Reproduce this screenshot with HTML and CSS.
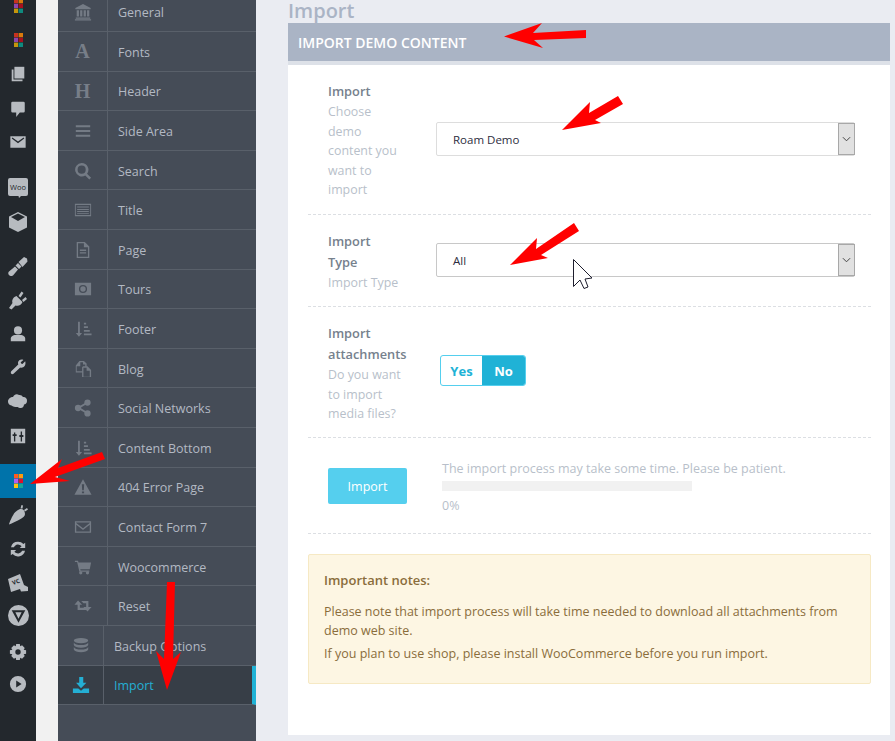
FILE: index.html
```html
<!DOCTYPE html>
<html lang="en">
<head>
<meta charset="utf-8">
<title>Import</title>
<link rel="stylesheet" href="styles.css">
</head>
<body>
<svg class="defs" xmlns="http://www.w3.org/2000/svg">
  <symbol id="grid" viewBox="0 0 9 14">
    <rect x="0" y="0" width="4" height="4.3" fill="#c8321e"/><rect x="4.6" y="0" width="4.4" height="4.3" fill="#d97a0c"/>
    <rect x="0" y="4.8" width="4" height="4.3" fill="#8e44ad"/><rect x="4.6" y="4.8" width="4.4" height="4.3" fill="#a90f1c"/>
    <rect x="0" y="9.6" width="4" height="4.4" fill="#c4960c"/><rect x="4.6" y="9.6" width="4.4" height="4.4" fill="#0f8a7e"/>
  </symbol>
  <symbol id="grid-on" viewBox="0 0 9 14">
    <rect x="0" y="0" width="4" height="4.3" fill="#ff5a1e"/><rect x="4.6" y="0" width="4.4" height="4.3" fill="#ff9a0c"/>
    <rect x="0" y="4.8" width="4" height="4.3" fill="#b45cf0"/><rect x="4.6" y="4.8" width="4.4" height="4.3" fill="#e0102a"/>
    <rect x="0" y="9.6" width="4" height="4.4" fill="#ffc20c"/><rect x="4.6" y="9.6" width="4.4" height="4.4" fill="#14a89a"/>
  </symbol>
  <symbol id="sort" viewBox="0 0 20 20">
    <path d="M4.500 2h2v12.500H9L5.500 18.500 2 14.500h2.500zM11 3h2.500v2H11zM11 7h4.500v2H11zM11 11h6.500v2H11zM11 15h8.500v2H11z"/>
  </symbol>
</svg>
<div class="app">
  <aside class="adminbar">
    <div class="ab-item ab-first"><svg class="ab-grid"><use href="#grid"/></svg></div>
    <div class="ab-item"><svg class="ab-grid"><use href="#grid"/></svg></div>
    <div class="ab-item"><svg class="ab-icon" viewBox="0 0 20 20"><path d="M6 2h11v13H6z"/><path d="M3 5h2v11h10v2H3z"/></svg></div>
    <div class="ab-item"><svg class="ab-icon" viewBox="0 0 20 20"><path d="M4 3h12a1.500 1.500 0 0 1 1.500 1.500v9A1.500 1.500 0 0 1 16 15h-4l-4 5v-5H4a1.500 1.500 0 0 1-1.500-1.500v-9A1.500 1.500 0 0 1 4 3z"/></svg></div>
    <div class="ab-item"><svg class="ab-icon" viewBox="0 0 20 20"><path fill-rule="evenodd" d="M1.500 3.500h17v13h-17zM3 6l7 5.500L17 6l-.8-1L10 9.500 3.800 5z"/></svg></div>
    <div class="ab-item ab-gap"><svg class="ab-woo" viewBox="0 0 20 20"><path d="M2 0h16a2 2 0 0 1 2 2v14a2 2 0 0 1-2 2h-5l-2 2-.5-2H2a2 2 0 0 1-2-2V2a2 2 0 0 1 2-2z"/><text class="woo-text" x="10" y="11.500" text-anchor="middle">Woo</text></svg></div>
    <div class="ab-item"><svg class="ab-icon ab-lg" viewBox="0 0 20 20"><path fill-rule="evenodd" d="M10 0l9 4.500v11L10 20l-9-4.500v-11zM3 5l7 4 7-4-7-3.500z"/></svg></div>
    <div class="ab-item ab-gap2"><svg class="ab-icon ab-lg" viewBox="0 0 20 20"><path d="M1 15.500l6-5 3 3-5 6c-1.500 1-3 .5-4-.5s-1-2.500 0-3.500zM7.500 9.500L10 7l3.500 3.500L11 13zM10.500 6L16 1l3 1.500.5 3-5 5.500z"/></svg></div>
    <div class="ab-item"><svg class="ab-icon ab-lg" viewBox="0 0 20 20"><path d="M8.500 6l6 6c-1 3-4 4.500-7 3.500L3.500 19.500 1 18l3.500-5C3.500 10 5.500 7 8.500 6zM10.500 6l3-4.500 2 1.500-3 4.500zM14 10l3.500-3 1.500 2-3.500 3z"/></svg></div>
    <div class="ab-item"><svg class="ab-icon" viewBox="0 0 20 20"><circle cx="10" cy="6" r="4.500"/><path d="M2 18v-3c0-2.500 3-4 5-4h6c2 0 5 1.500 5 4v3z"/></svg></div>
    <div class="ab-item"><svg class="ab-icon" viewBox="0 0 20 20"><path d="M18 2.500l-3 3-1.500-.5L13 3.500l3-2.500c-2.500-1-5.500 0-6 3 0 1 0 1.500.3 2L2.500 13.500c-1.500 1.500 .5 4.500 2.500 3l7.500-7c3 1 7-2 5.500-7z"/></svg></div>
    <div class="ab-item"><svg class="ab-icon ab-lg" viewBox="0 0 20 20"><path d="M5 5a4 4 0 0 1 6-2 4 4 0 0 1 4 2 3.500 3.500 0 0 1 4 4c0 2-1.500 3.500-3 3.500 0 2-1.500 4-4 3.500-2-.5-2-1-3-1-2 0-4 0-5.500-1.500C1 13 0 11 0 9.500 0 7 2.500 5 5 5z"/></svg></div>
    <div class="ab-item"><svg class="ab-icon" viewBox="0 0 20 20"><path fill-rule="evenodd" d="M2 2h16v16H2zM5.500 6v2H4v2h1.500v6h1.500v-6h1.500V8H7V6zM13 5v4h-1.500v2H13v5h1.500v-5H16V9h-1.500V5z"/></svg></div>
    <div class="ab-item ab-active"><svg class="ab-grid"><use href="#grid-on"/></svg></div>
    <div class="ab-item"><svg class="ab-icon ab-lg" viewBox="0 0 20 20"><path d="M11 4.500c3-1.500 6 .5 6 4.500 0 2-2 3.500-4 4.800C9 16 4 18.500 1 19.500 1.500 17 4 12 6 8.500 7.500 6.500 9 5.500 11 4.500zM12.500 3.500L13.500 0l1.500.5-.5 3zM16 5l3-2 1 1.500-3 2z"/></svg></div>
    <div class="ab-item"><svg class="ab-icon" viewBox="0 0 20 20"><path d="M10 2a8 8 0 0 1 6 2.500L18 3v6h-6l2-2a5 5 0 0 0-8.500 1H2.200A8 8 0 0 1 10 2zM2 11h6l-2 2a5 5 0 0 0 8.500-1h3.300A8 8 0 0 1 4 15.500L2 17z"/></svg></div>
    <div class="ab-item"><svg class="ab-icon ab-lg" viewBox="0 0 20 20"><path d="M0 6l12-5 4 11 4 2v4l-7 .5-1-2.500-9 3z"/><text class="vc-text" x="5" y="12" transform="rotate(-20 5 12)">VC</text></svg></div>
    <div class="ab-item ab-tight"><svg class="ab-icon ab-xl" viewBox="0 0 20 20"><path fill-rule="evenodd" d="M10 0a10 10 0 1 1 0 20 10 10 0 0 1 0-20zM3.500 5l6.500 12 6.500-12zM7 7h6l-3 6z"/></svg></div>
    <div class="ab-item ab-wide"><svg class="ab-icon" viewBox="0 0 20 20"><path fill-rule="evenodd" d="M8 1h4l.5 2.500 2-1 3 3-1.200 2 2.700.5v4l-2.700.5 1.200 2-3 3-2-1.200L12 19H8l-.5-2.700-2 1.200-3-3 1.200-2L1 12V8l2.700-.5-1.200-2 3-3 2 1zM10 7a3 3 0 1 0 0 6 3 3 0 0 0 0-6z"/></svg></div>
    <div class="ab-item ab-tight"><svg class="ab-icon" viewBox="0 0 20 20"><path fill-rule="evenodd" d="M10 1a9 9 0 1 1 0 18 9 9 0 0 1 0-18zM8 6v8l6-4z"/></svg></div>
  </aside>

  <div class="gutter"></div>

  <nav class="subnav">
    <a class="nav-row"><span class="nav-ico"><svg viewBox="0 0 20 20"><path d="M10 1l8.500 4.500V7h-17V5.500zM3 8h2.500v7H3zM6.800 8h2.500v7H6.800zM10.700 8h2.500v7h-2.500zM14.500 8H17v7h-2.500zM2 16h16v1.500H2zM1 18h18v1.500H1z"/></svg></span><span class="nav-label">General</span></a>
    <a class="nav-row"><span class="nav-ico nav-letter">A</span><span class="nav-label">Fonts</span></a>
    <a class="nav-row"><span class="nav-ico nav-letter">H</span><span class="nav-label">Header</span></a>
    <a class="nav-row"><span class="nav-ico"><svg viewBox="0 0 20 20"><path d="M2 3.500h16v2.300H2zM2 8.800h16v2.300H2zM2 14.200h16v2.300H2z"/></svg></span><span class="nav-label">Side Area</span></a>
    <a class="nav-row"><span class="nav-ico"><svg viewBox="0 0 20 20"><path fill-rule="evenodd" d="M8.500 1a7.500 7.500 0 0 1 6 12l4.500 4.500-2 2-4.500-4.500A7.500 7.500 0 1 1 8.500 1zm0 3a4.500 4.500 0 1 0 0 9 4.500 4.500 0 0 0 0-9z"/></svg></span><span class="nav-label">Search</span></a>
    <a class="nav-row"><span class="nav-ico"><svg viewBox="0 0 20 20"><path fill-rule="evenodd" d="M1 3h18v14H1zM2 4.500v11h16v-11zM3.500 6H16.500v1.300H3.500zM3.500 9H16.500v1H3.500zM3.500 11.200H16.500v1H3.500zM3.500 13.300H16.500v1H3.500z"/></svg></span><span class="nav-label">Title</span></a>
    <a class="nav-row"><span class="nav-ico"><svg viewBox="0 0 20 20"><path fill-rule="evenodd" d="M3 1h9l5 5v13H3zM4.500 2.500v15h11V7H11V2.500zM6.500 9.500h7V11h-7zM6.500 12.500h7V14h-7z"/></svg></span><span class="nav-label">Page</span></a>
    <a class="nav-row"><span class="nav-ico"><svg viewBox="0 0 20 20"><path fill-rule="evenodd" d="M1 3h18v14H1zM10 5.500a4.500 4.500 0 1 0 0 9 4.500 4.500 0 0 0 0-9zM10 7a3 3 0 1 1 0 6 3 3 0 0 1 0-6z"/></svg></span><span class="nav-label">Tours</span></a>
    <a class="nav-row"><span class="nav-ico"><svg><use href="#sort"/></svg></span><span class="nav-label">Footer</span></a>
    <a class="nav-row"><span class="nav-ico"><svg viewBox="0 0 20 20"><path fill-rule="evenodd" d="M6 1h5l3 3v3h1l4 4v8H9v-5H2V6zM7 2.500v4.500H3v5.500h6V8l1-1h2.500V5H10V2.500zM10.500 8.500v10h7v-6.500H14V8.500z"/></svg></span><span class="nav-label">Blog</span></a>
    <a class="nav-row"><span class="nav-ico"><svg viewBox="0 0 20 20"><circle cx="4.500" cy="10" r="3.500"/><circle cx="15" cy="4" r="3.500"/><circle cx="15" cy="16" r="3.500"/><path d="M4.500 9l10-6 1 1.800-10 6zM5.500 9l10 6-1 1.800-10-6z"/></svg></span><span class="nav-label">Social Networks</span></a>
    <a class="nav-row"><span class="nav-ico"><svg><use href="#sort"/></svg></span><span class="nav-label">Content Bottom</span></a>
    <a class="nav-row"><span class="nav-ico"><svg viewBox="0 0 20 20"><path fill-rule="evenodd" d="M10 1.500l9.500 17H.5zM8.700 7l.4 6.500h1.800l.4-6.500zM8.800 15v2h2.400v-2z"/></svg></span><span class="nav-label">404 Error Page</span></a>
    <a class="nav-row"><span class="nav-ico"><svg viewBox="0 0 20 20"><path fill-rule="evenodd" d="M1 3.500h18v13H1zM2.500 5v.6L10 11.300l7.500-5.700V5zM2.500 7.500V15h15V7.500L10 13.200z"/></svg></span><span class="nav-label">Contact Form 7</span></a>
    <a class="nav-row"><span class="nav-ico"><svg viewBox="0 0 20 20"><circle cx="7.500" cy="16.500" r="1.800"/><circle cx="15" cy="16.500" r="1.800"/><path d="M1 3h3.500l.5 2h14l-1.500 7.500H7l.4 1.500H17v1.200H6L3.500 4.500H1z"/></svg></span><span class="nav-label">Woocommerce</span></a>
    <a class="nav-row"><span class="nav-ico"><svg viewBox="0 0 20 20"><path d="M4.500 4L9 8.500H6.500V12H12l2.500 2.500H4V8.500H.5zM8 4.500H16V11h3.500L15 16l-4.500-5h3V7H10.500z"/></svg></span><span class="nav-label">Reset</span></a>
    <a class="nav-row nav-top"><span class="nav-ico"><svg viewBox="0 0 20 20"><ellipse cx="10" cy="4" rx="8" ry="3"/><path d="M2 6c1 2 4 3 8 3s7-1 8-3v3c-1 2-4 3-8 3s-7-1-8-3zM2 11c1 2 4 3 8 3s7-1 8-3v3c-1 2-4 3-8 3s-7-1-8-3z"/></svg></span><span class="nav-label">Backup Options</span></a>
    <a class="nav-row nav-top nav-current"><span class="nav-ico"><svg viewBox="0 0 20 20"><path d="M8 1h4.500v6.500H16L10 13.500 4.500 7.500H8zM1 14h6l3 2.500 3-2.500h6v5H1z"/></svg></span><span class="nav-label">Import</span></a>
  </nav>

  <main class="main">
    <h1 class="page-title">Import</h1>
    <section class="panel">
      <h2 class="panel-head">Import Demo Content</h2>
      <div class="panel-body">
        <div class="form-row">
          <div class="field-text">
            <div class="field-name">Import</div>
            <div class="field-desc">Choose<br>demo<br>content you<br>want to<br>import</div>
          </div>
          <div class="select select-light"><span class="select-value">Roam Demo</span><span class="select-btn"><svg viewBox="0 0 10 6"><path d="M1 1l4 4 4-4" /></svg></span></div>
        </div>
        <div class="form-row form-type">
          <div class="field-text">
            <div class="field-name">Import<br>Type</div>
            <div class="field-desc">Import Type</div>
          </div>
          <div class="select"><span class="select-value">All</span><span class="select-btn"><svg viewBox="0 0 10 6"><path d="M1 1l4 4 4-4" /></svg></span></div>
        </div>
        <div class="form-row form-attach">
          <div class="field-text">
            <div class="field-name">Import<br>attachments</div>
            <div class="field-desc">Do you want<br>to import<br>media files?</div>
          </div>
          <div class="toggle"><span class="toggle-opt toggle-off">Yes</span><span class="toggle-opt toggle-on">No</span></div>
        </div>
        <div class="form-row form-import">
          <button class="import-btn">Import</button>
          <div class="progress-wrap">
            <div class="progress-msg">The import process may take some time. Please be patient.</div>
            <div class="progress-bar"></div>
            <div class="progress-val">0%</div>
          </div>
        </div>
        <div class="notes">
          <h3 class="notes-title">Important notes:</h3>
          <p class="notes-p">Please note that import process will take time needed to download all attachments from demo web site.</p>
          <p class="notes-p">If you plan to use shop, please install WooCommerce before you run import.</p>
        </div>
      </div>
    </section>
  </main>
</div>

<svg class="overlay" viewBox="0 0 895 741" xmlns="http://www.w3.org/2000/svg">
  <g class="arrow">
    <polygon points="504,36.500 542,23 533,33 586,30 586,38 534,40 543,48"/>
    <polygon points="562,130 590,102 589,113 618,96 623,104 595,120 601,123"/>
    <polygon points="510,265 537,238 536,249 574,223 579,231 541,255 548,258"/>
    <polygon points="30,484 62,459 58,468 102,452 105,459 55,477 70,481"/>
    <polygon points="167,582 175,582 173,659 181,652 167,690 156,651 164,659"/>
  </g>
  <polygon class="cursor" points="573.500,259.500 573.500,286.500 580,280 584,288.500 588,287 585,279 592,278"/>
</svg>
</body>
</html>
```
FILE: styles.css
```css
* { box-sizing: border-box; }
html, body { margin: 0; height: 741px; overflow: hidden; }
body { background: #eaecf2; font-family: "Open Sans", "Liberation Sans", sans-serif; font-size: 12.500px; position: relative; }
.defs { display: none; }
.app { display: flex; height: 741px; overflow: hidden; }

.adminbar { width: 36px; flex: none; background: #23282d; display: flex; flex-direction: column; }
.ab-item { height: 34px; flex: none; display: flex; align-items: center; justify-content: center; }
.ab-first { margin-top: -11px; }
.ab-gap { margin-top: 12px; }
.ab-gap2 { margin-top: 10px; }
.ab-active { background: #0073aa; margin-top: 11px; }
.ab-tight { margin-top: -2px; }
.ab-wide { margin-top: 3px; }
.ab-grid { width: 9px; height: 14px; }
.ab-icon { width: 18px; height: 18px; fill: #b7bbc0; }
.ab-lg { width: 20px; height: 20px; }
.ab-xl { width: 21px; height: 21px; }
.ab-woo { width: 20px; height: 20px; fill: #b7bbc0; }
.woo-text { font-size: 7.500px; font-weight: 400; fill: #23282d; }
.vc-text { font-size: 6px; font-weight: 700; fill: #23282d; }

.gutter { width: 22px; flex: none; background: #f1f1f1; }

.subnav { width: 198px; flex: none; background: #454c57; }
.nav-row { display: flex; height: 39.600px; border-bottom: 1px solid #59606a; color: #b3b9c3; align-items: stretch; }
.nav-row:first-child { margin-top: -7.600px; }
.nav-ico { width: 50px; flex: none; padding-top: 1px; border-right: 1px solid #59606a; display: flex; align-items: center; justify-content: center; color: #777e88; }
.nav-ico svg { width: 18px; height: 18px; fill: #747b85; }
.nav-letter { font-family: "Liberation Serif", serif; font-weight: 700; font-size: 20px; }
.nav-label { padding: 2px 0 0 10px; display: flex; align-items: center; }
.nav-top .nav-ico { width: 46px; }
.nav-current { background: #373e47; color: #24afd4; border-right: 4px solid #20b2d6; }
.nav-current .nav-ico svg { fill: #24afd4; }

.main { flex: 1; min-width: 0; padding: 0 5px 0 32px; }
.page-title { margin: 0; height: 23px; font-size: 20px; line-height: 22px; font-weight: 600; color: #aab4c5; }
.panel { background: #fff; height: 712px; }
.panel-head { margin: 0; height: 42px; padding: 0 10px; border-bottom: 4px solid #dde1e8; background: #aab4c5; color: #fff; font-size: 14px; line-height: 40px; font-weight: 600; text-transform: uppercase; }
.panel-body { padding: 0 19px 0 20px; }

.form-row { display: flex; align-items: center; padding: 16px 20px 14px; border-bottom: 1px dashed #dcdfe3; }
.form-type { padding-bottom: 13.400px; }
.form-attach { padding-bottom: 13.200px; }
.field-text { width: 108px; flex: none; }
.field-name { font-size: 12.800px; font-weight: 600; color: #76818d; line-height: 21px; }
.field-desc { font-size: 12.400px; color: #b8bfca; line-height: 19.600px; }

.select { flex: 1; margin: 0 -4px 4px 0; height: 34px; border: 1px solid #c8c8c8; border-radius: 2px; display: flex; align-items: stretch; color: #2d2d40; font-size: 11.500px; }
.select-light { border-color: #ddd; margin-bottom: 3px; }
.select-value { flex: 1; padding: 1px 0 0 16px; display: flex; align-items: center; }
.select-btn { width: 17px; margin: 0 -1px 0 0; background: #e1e1e1; border: 1px solid #a8a8a8; display: flex; align-items: center; justify-content: center; }
.select-btn svg { width: 9px; height: 6px; fill: none; stroke: #444; stroke-width: 1.100; }

.toggle { margin: 0 0 6px 4px; display: flex; width: 86px; height: 31px; border: 1px solid #55cfee; border-radius: 3px; overflow: hidden; font-weight: 700; font-size: 13px; }
.toggle-opt { padding-top: 1px; display: flex; align-items: center; justify-content: center; color: #20b2d6; }
.toggle-off { width: 41px; }
.toggle-on { flex: 1; background: #20b2d6; color: #fff; }

.form-import { align-items: flex-start; padding: 20px 20px 0; height: 96px; }
.import-btn { width: 79px; height: 36px; flex: none; margin-top: 10px; border: 0; border-radius: 2px; background: #55cfee; color: #fff; font: inherit; padding: 1px 0 0; }
.progress-wrap { margin-left: 35px; flex: 1; color: #b8bfca; line-height: 20px; }
.progress-msg { padding-top: 1px; }
.progress-bar { width: 250px; height: 10px; background: #f1f1f1; margin-top: 2px; }
.progress-val { margin-top: 5px; }

.notes { margin-top: 20px; height: 130px; padding: 15px; background: #fdf6e3; border: 1px solid #f6e9c4; color: #8a6d3b; border-radius: 2px; }
.notes-title { margin: 0 0 12px; font-size: 13px; line-height: 20px; font-weight: 600; }
.notes-p { margin: 0 0 4px; line-height: 19px; }

.overlay { position: absolute; left: 0; top: 0; width: 895px; height: 741px; pointer-events: none; }
.arrow { fill: #f00; }
.cursor { fill: #fff; stroke: #1e1e2e; stroke-width: 1; }
```
